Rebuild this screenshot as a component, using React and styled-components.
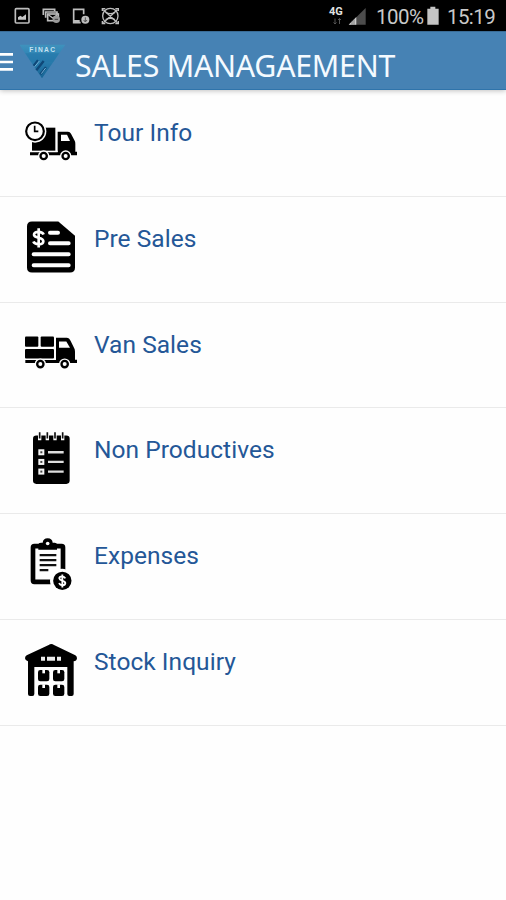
import React from "react";
import styled, { createGlobalStyle } from "styled-components";

const Global = createGlobalStyle`
  * { box-sizing: border-box; }
  body { margin: 0; background: #fefefe; font-family: Roboto, sans-serif; }
`;

const Screen = styled.main`
  width: 506px;
  height: 900px;
  overflow: hidden;
  display: flex;
  flex-direction: column;
  background: #fefefe;
`;

const StatusBar = styled.div`
  height: 31px;
  flex: none;
  background: #000;
  color: #c9c9c9;
  display: flex;
  align-items: flex-start;
  justify-content: space-between;
`;

const StatusGlyphs = styled.svg`
  display: block;
  flex: none;
  width: ${(p) => p.$w}px;
  height: 31px;
`;

const StatusGroup = styled.div`
  display: flex;
`;

const Signal = styled.div`
  width: 17px;
  padding-top: 7px;
  display: flex;
  flex-direction: column;
  font: 700 11px/10px Roboto, sans-serif;
  color: #e2e2e2;
`;

const DataArrows = styled.svg`
  width: 9px;
  height: 7px;
  margin: 1px 0 0 4px;
`;

const StatusText = styled.span`
  display: block;
  width: ${(p) => p.$w}px;
  font-size: 20.5px;
  line-height: 34px;
  letter-spacing: ${(p) => p.$ls}px;
  white-space: nowrap;
`;

const AppBar = styled.header`
  height: 59px;
  flex: none;
  display: flex;
  align-items: flex-start;
  background: #4682b4;
  border-top: 1px solid #3a6c96;
  border-bottom: 1px solid #2f74ab;
  box-shadow: 0 1px 5px rgba(0, 0, 0, 0.24);
  z-index: 1;
`;

const MenuIcon = styled.svg`
  width: 20px;
  height: 58px;
  flex: none;
`;

const Logo = styled.svg`
  width: 46px;
  height: 58px;
  flex: none;
`;

const Title = styled.h1`
  margin: 0 0 0 9px;
  font: 400 30.3px/68px "Noto Sans", sans-serif;
  letter-spacing: -0.25px;
  color: #f4faff;
  white-space: nowrap;
`;

const List = styled.ul`
  list-style: none;
  margin: 0;
  padding: 1px 0 0;
`;

const Row = styled.li`
  height: 105.8px;
  padding: 23px 0 0 24px;
  display: flex;
  align-items: flex-start;
  border-bottom: 1px solid #eaeaea;
`;

const Icon = styled.svg`
  width: 54px;
  height: 54px;
  flex: none;
`;

const Label = styled.span`
  margin: 4px 0 0 16px;
  font-size: 24.5px;
  line-height: 30px;
  letter-spacing: 0.04px;
  color: #245797;
  white-space: nowrap;
`;

const Wheel = ({ x, y }) => (
  <>
    <circle cx={x} cy={y} r="17" fill="#fefefe" />
    <circle cx={x} cy={y} r="9.5" fill="#fefefe" stroke="#000" strokeWidth="7" />
  </>
);

const TourIcon = () => (
  <Icon viewBox="42 27 162 162">
    <path d="M66 68H136V139H66Z" />
    <path d="M143 80H174Q180 80 183 86L194 107Q196 110 196 116V140H201V151H60V142H143Z" />
    <path d="M60 139H143" stroke="#fefefe" strokeWidth="4" />
    <path d="M153 89H171L180 108H153Z" fill="#fefefe" />
    <circle cx="75" cy="79" r="34" fill="#fefefe" />
    <circle cx="75" cy="79" r="26.5" fill="#fefefe" stroke="#000" strokeWidth="6.5" />
    <path d="M74 62V79H85" fill="none" stroke="#000" strokeWidth="5" />
    <Wheel x={101} y={153} />
    <Wheel x={167} y={153} />
  </Icon>
);

const InvoiceIcon = () => (
  <Icon viewBox="42 29.4 162 162">
    <path d="M66 34H145L195 77V172Q195 187 180 187H66Q51 187 51 172V49Q51 34 66 34Z" />
    <path d="M120 68H144M120 99H176M71 132H176M71 165H176" stroke="#fefefe" strokeWidth="12" strokeLinecap="round" />
    <path d="M101 73C97 63 71 61 72 74C73 86 101 79 100 94C99 106 74 104 70 94M86 54V112" fill="none" stroke="#fefefe" strokeWidth="8" />
  </Icon>
);

const VanIcon = () => (
  <Icon viewBox="42 16.8 162 162">
    <rect x="45" y="48" width="40" height="31" rx="3" />
    <rect x="92" y="48" width="40" height="31" rx="3" />
    <rect x="45" y="86" width="87" height="28" rx="3" />
    <path d="M138 52H170Q178 52 182 62L192 82Q195 86 195 94V118H201V128H46V119H138Z" />
    <path d="M147 63H169L180 82H147Z" fill="#fefefe" />
    <Wheel x={91} y={131} />
    <Wheel x={164} y={131} />
  </Icon>
);

const ChecklistIcon = () => (
  <Icon viewBox="42 34.2 162 162">
    <rect x="69" y="48" width="110" height="145" rx="10" />
    <path d="M89 46V62M112 46V62M135 46V62M158 46V62" stroke="#fefefe" strokeWidth="10" />
    <path d="M89 38V57M112 38V57M135 38V57M158 38V57" stroke="#111" strokeWidth="5" />
    <path d="M114 98H161M114 127H161M114 156H161" stroke="#ddd" strokeWidth="7" />
    {[98, 127, 156].map((y) => (
      <g key={y}>
        <rect x="85" y={y - 9} width="18" height="18" fill="#f4f4f4" />
        <rect x="91" y={y - 3} width="6" height="6" fill="#444" />
      </g>
    ))}
  </Icon>
);

const ExpensesIcon = () => (
  <Icon viewBox="42 21.6 162 162">
    <rect x="69" y="49" width="90" height="107" rx="4" fill="#fefefe" stroke="#000" strokeWidth="14" />
    <path d="M85 60V45Q85 39 93 39H98Q99 25 113 25Q127 25 128 39H134Q141 39 141 45V60Z" />
    <circle cx="113" cy="41" r="5.5" fill="#fefefe" />
    <path d="M89 76H139M89 91H139M89 106H139M89 121H115" stroke="#111" strokeWidth="7" />
    <circle cx="156" cy="153" r="36" fill="#fefefe" />
    <circle cx="157" cy="153" r="27.5" />
    <path d="M166 146C162 137 147 138 148 146C149 154 166 151 166 160C165 169 151 168 147 160M157 134V173" fill="none" stroke="#fefefe" strokeWidth="5.5" />
  </Icon>
);

const WarehouseIcon = () => (
  <Icon viewBox="42 24 162 162">
    <path d="M124 27Q128 27 132 30L196 61Q201 64 201 70Q200 79 191 79V177Q191 183 185 183H178Q172 183 172 177V96H73V177Q73 183 67 183H60Q54 183 54 177V79Q46 78 45 70Q45 64 50 61L116 30Q120 27 124 27Z" />
    <path d="M93 65H105V77H93ZM111 65H135V77H111ZM141 65H153V77H141Z" fill="#eee" />
    {[[84, 105], [129, 105], [84, 149], [129, 149]].map(([x, y]) => (
      <g key={`${x}-${y}`}>
        <rect x={x} y={y} width="34" height="34" rx="7" />
        <path d={`M${x + 17} ${y - 1}V${y + 10}`} stroke="#fefefe" strokeWidth="8" />
      </g>
    ))}
  </Icon>
);

const ITEMS = [
  { label: "Tour Info", icon: TourIcon },
  { label: "Pre Sales", icon: InvoiceIcon },
  { label: "Van Sales", icon: VanIcon },
  { label: "Non Productives", icon: ChecklistIcon },
  { label: "Expenses", icon: ExpensesIcon },
  { label: "Stock Inquiry", icon: WarehouseIcon },
];

const Notifications = () => (
  <StatusGlyphs $w={130} viewBox="0 0 390 93">
    <g fill="none" stroke="#bdbdbd" strokeWidth="5">
      <rect x="46" y="26" width="41" height="43" rx="3" />
      <path d="M54 59V52L61 47L67 51L78 43V59Z" fill="#c8c8c8" stroke="none" />
      <path d="M130 45V28H164V34" />
      <path d="M137 53V36H171V43" />
      <rect x="143" y="42" width="32" height="20" />
      <path d="M145 44L158 54L173 44" strokeWidth="4" />
      <circle cx="169" cy="58" r="11" fill="#9a9a9a" stroke="none" />
      <path d="M164 58H174" stroke="#444" strokeWidth="3" />
      <path d="M251 43V28H221V68H242" />
      <path d="M219 64H239" strokeWidth="8" />
      <circle cx="256" cy="59" r="12" fill="#bdbdbd" stroke="none" />
      <path d="M256 52V66M251 60L256 66L261 60" stroke="#555" strokeWidth="3" />
      <circle cx="331" cy="48" r="23" strokeWidth="4" />
      <path d="M307 33V26H316M346 26H355V33M355 63V71H346M316 71H307V63M310 29L352 68M352 29L310 68" strokeWidth="4" />
      <path d="M317 37Q331 45 345 37M317 59Q331 51 345 59" strokeWidth="4" />
    </g>
  </StatusGlyphs>
);

export default function App() {
  return (
    <>
      <Global />
      <Screen>
        <StatusBar>
          <Notifications />
          <StatusGroup>
            <Signal>
              4G
              <DataArrows viewBox="0 0 9 7">
                <path d="M2 0.5V6M0.5 4.5L2 6L3.5 4.5M6.5 6V0.5M5 2L6.5 0.5L8 2" fill="none" stroke="#555" />
              </DataArrows>
            </Signal>
            <StatusGlyphs $w={30} viewBox="78 0 90 93">
              <path d="M86 74L137 24V74Z" fill="#4c4c4c" />
              <path d="M86 74L109 51V74Z" fill="#ccc" />
              <path d="M96 62V74M102 58V74" stroke="#555" strokeWidth="2" />
            </StatusGlyphs>
            <StatusText $w={49} $ls={-0.5}>100%</StatusText>
            <StatusGlyphs $w={22} viewBox="315 0 66 93">
              <path d="M322 26H331V20H346V26H356V74H322Z" fill="#c4c4c4" />
            </StatusGlyphs>
            <StatusText $w={59} $ls={-0.6}>15:19</StatusText>
          </StatusGroup>
        </StatusBar>
        <AppBar>
          <MenuIcon viewBox="0 96 60 174">
            <path d="M0 163H39M0 186H39M0 208H39" stroke="#fff" strokeWidth="8" />
          </MenuIcon>
          <Logo viewBox="60 96 138 174">
            <defs>
              <linearGradient id="fade" x1="0" y1="0" x2="0" y2="1">
                <stop offset="0" stopColor="#3f92bd" />
                <stop offset="0.35" stopColor="#2d83b4" />
                <stop offset="1" stopColor="#176494" />
              </linearGradient>
            </defs>
            <path d="M58 134H196L126 235Z" fill="url(#fade)" />
            <path d="M76 160H177L160 185H93Z" fill="#2476a8" opacity="0.6" />
            <path d="M101 197L114 181M109 211L131 183M121 223L138 202" stroke="#0f4878" strokeWidth="7" />
            <path d="M104 200L118 183M124 221L137 204" stroke="#73b2d6" strokeWidth="3" />
            <text x="88" y="157" fontFamily="Liberation Sans, sans-serif" fontSize="20" fontWeight="700" fill="#c5e2f1" textLength="77">FINAC</text>
          </Logo>
          <Title>SALES MANAGAEMENT</Title>
        </AppBar>
        <List>
          {ITEMS.map(({ label, icon: Glyph }) => (
            <Row key={label}>
              <Glyph />
              <Label>{label}</Label>
            </Row>
          ))}
        </List>
      </Screen>
    </>
  );
}
